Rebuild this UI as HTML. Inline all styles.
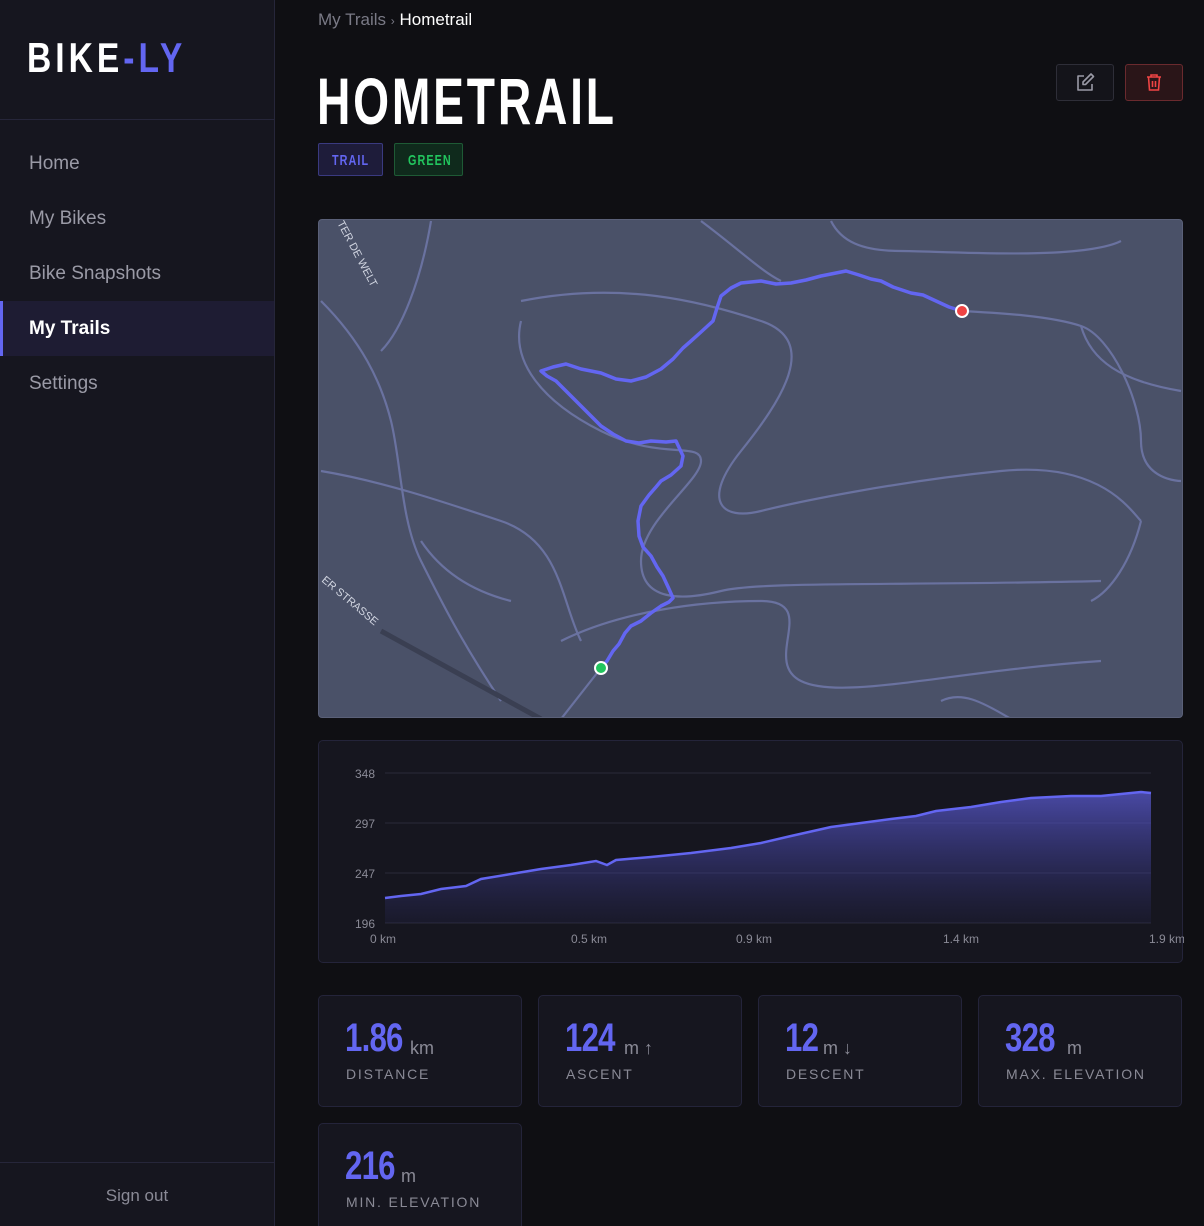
<!DOCTYPE html>
<html><head><meta charset="utf-8"><style>
*{box-sizing:border-box;margin:0;padding:0}
html,body{width:1204px;height:1226px;overflow:hidden}
body{background:#0f0f13;font-family:"Liberation Sans",sans-serif;position:relative;color:#fff}
.side{position:absolute;left:0;top:0;width:275px;height:1226px;background:#16161f;border-right:1px solid #26263a}
.sx{display:inline-block;transform-origin:0 50%;white-space:nowrap;font-weight:bold}
.logo{position:absolute;left:27px;top:34px;font-size:42px;letter-spacing:5px;transform:scaleX(0.8)}
.hr{position:absolute;left:0;width:274px;height:1px;background:#26263a}
.nav{position:absolute;left:0;width:274px;height:55px;line-height:55px;padding-left:29px;font-size:19px;color:#9a9aa6}
.nav.act{background:#1e1c33;color:#fff;border-left:3px solid #6366f1;padding-left:26px;font-weight:bold}
.tag{position:absolute;top:143px;height:33px;line-height:33px;border-radius:2px;overflow:hidden}
.tag .sx{font-size:15px;letter-spacing:1.5px;transform:scaleX(0.72);position:absolute;left:13px}
.btn{position:absolute;top:64px;width:58px;height:37px;border-radius:3px}
.card{position:absolute;width:204px;height:112px;background:#16161f;border:1px solid #24243a;border-radius:5px}
.card .v{position:absolute;left:26px;top:20px;font-size:40px;color:#6366f1;letter-spacing:-1px;transform:scaleX(0.78)}
.card .u{position:absolute;top:42px;font-size:18px;color:#8a8a96}
.card .l{position:absolute;left:27px;top:70px;font-size:14px;letter-spacing:1.8px;color:#8a8a96}
</style></head><body>
<div class="side">
<div class="logo sx"><span>BIKE</span><span style="color:#6366f1">-LY</span></div>
<div class="hr" style="top:119px"></div>
<div class="nav" style="top:136px">Home</div>
<div class="nav" style="top:191px">My Bikes</div>
<div class="nav" style="top:246px">Bike Snapshots</div>
<div class="nav act" style="top:301px">My Trails</div>
<div class="nav" style="top:356px">Settings</div>
<div class="hr" style="top:1162px"></div>
<div style="position:absolute;top:1186px;width:274px;text-align:center;color:#8a8a96;font-size:17px">Sign out</div>
</div>
<div style="position:absolute;left:318px;top:10px;font-size:17px;color:#7a7a86">My Trails <span style="font-size:12px">›</span> <span style="color:#fff">Hometrail</span></div>
<div class="sx" style="position:absolute;left:317px;top:66px;font-size:66px;letter-spacing:4px;transform:scaleX(0.7);line-height:70px">HOMETRAIL</div>
<div class="tag" style="left:318px;width:65px;background:#1e1c3a;border:1px solid #3a3a80;color:#6366f1"><span class="sx">TRAIL</span></div>
<div class="tag" style="left:394px;width:69px;background:#0f2a1c;border:1px solid #1e5a35;color:#22c55e"><span class="sx">GREEN</span></div>
<div class="btn" style="left:1056px;border:1px solid #2e2e38;background:#14141a"><svg width="56" height="35" viewBox="0 0 56 35"><g fill="none" stroke="#9a9aa6" stroke-width="1.6" stroke-linejoin="round"><path d="M27 11h-6v14h14v-6"/><path d="M34 9l2.5 2.5-8 8H26v-2.5z"/></g></svg></div>
<div class="btn" style="left:1125px;border:1px solid #6a2a2e;background:#2a1518"><svg width="56" height="35" viewBox="0 0 56 35"><g fill="none" stroke="#ef4444" stroke-width="1.6"><path d="M21 12h14M25 12v-2h6v2M22.5 12l1 13h9l1-13M26.5 16v6M29.5 16v6"/></g></svg></div>
<div style="position:absolute;left:318px;top:219px;width:865px;height:499px;background:#4a5168;border:1px solid #5a6078;border-radius:4px;overflow:hidden">
<svg width="865" height="499" viewBox="318 219 865 499">
<g fill="none" stroke="#6a72a0" stroke-width="2.2">
<path d="M320 300C360 340 380 380 390 420S400 520 420 560 460 640 500 700"/>
<path d="M430 220C420 280 400 330 380 350"/>
<path d="M520 300C620 280 700 300 760 320S780 400 740 450 720 520 760 510 900 480 1000 470 1130 510 1140 520"/>
<path d="M520 320C510 360 540 400 600 430S700 440 700 460 640 520 640 560 680 600 720 590 900 585 1100 580 1180 460"/>
<path d="M560 640C620 610 700 600 760 600S760 660 800 680 950 670 1100 660 1180 620"/>
<path d="M700 220C740 250 760 270 780 280M960 310C1000 312 1050 315 1080 325S1140 400 1140 440 1180 480 1180 480"/>
<path d="M320 470C380 480 440 500 500 520S560 600 580 640M600 667L560 718M420 540C440 570 470 590 510 600"/>
<path d="M830 220C840 240 860 250 900 250S1080 260 1120 240M1080 325C1090 360 1120 380 1180 390"/>
<path d="M1010 718C980 700 960 690 940 700M1140 520C1130 560 1110 590 1090 600"/>
</g>
<path d="M380 630L540 718" stroke="#3a3f52" stroke-width="5"/>
<text x="336" y="222" fill="#d0d4e0" font-size="11" transform="rotate(62 336 222)" font-family="Liberation Sans">TER DE WELT</text>
<text x="320" y="580" fill="#d0d4e0" font-size="11" transform="rotate(40 320 580)" font-family="Liberation Sans">ER STRASSE</text>
<path d="M600 667L606 660 612 650 618 643 624 632 630 625 640 620 650 612 660 605 668 601 672 597 668 588 662 575 656 566 650 555 642 546 638 535 637 520 640 505 648 494 655 486 660 480 670 474 680 465 682 455 675 440 665 441 650 440 638 442 625 440 612 433 600 425 590 415 575 400 565 390 555 380 546 375 540 370 552 366 565 363 580 368 600 372 615 378 630 380 645 376 660 368 672 358 682 347 690 340 700 331 712 320 716 307 720 295 730 287 740 282 760 280 775 283 790 282 805 279 820 275 845 270 858 274 870 278 880 280 892 286 910 292 922 294 935 300 948 306 961 310" fill="none" stroke="#6366f1" stroke-width="3.5" stroke-linejoin="round"/>
<circle cx="600" cy="667" r="6" fill="#22c55e" stroke="#fff" stroke-width="2"/>
<circle cx="961" cy="310" r="6" fill="#ef4444" stroke="#fff" stroke-width="2"/>
</svg></div>
<div style="position:absolute;left:318px;top:740px;width:865px;height:223px;background:#16161f;border:1px solid #24243a;border-radius:5px">
<svg width="865" height="223" viewBox="318 740 865 223" font-family="Liberation Sans" font-size="12" fill="#8a8a96">
<defs><linearGradient id="g" x1="0" y1="0" x2="0" y2="1"><stop offset="0" stop-color="#5a5ad0" stop-opacity="0.75"/><stop offset="1" stop-color="#3a3a90" stop-opacity="0.1"/></linearGradient></defs>
<g stroke="#2a2a3a"><path d="M384 772H1150M384 822H1150M384 872H1150M384 922H1150"/></g>
<text x="374" y="777" text-anchor="end">348</text><text x="374" y="827" text-anchor="end">297</text><text x="374" y="877" text-anchor="end">247</text><text x="374" y="927" text-anchor="end">196</text>
<text x="369" y="942">0 km</text><text x="570" y="942">0.5 km</text><text x="735" y="942">0.9 km</text><text x="942" y="942">1.4 km</text><text x="1148" y="942">1.9 km</text>
<path d="M384 922L384 897 400 895 420 893 440 888 465 885 480 878 510 873 540 868 570 864 595 860 606 864 615 859 650 856 690 852 730 847 760 842 790 835 830 826 860 822 890 818 915 815 935 810 970 806 1000 801 1030 797 1070 795 1100 795 1120 793 1140 791 1150 792 1150 922Z" fill="url(#g)"/>
<path d="M384 897 400 895 420 893 440 888 465 885 480 878 510 873 540 868 570 864 595 860 606 864 615 859 650 856 690 852 730 847 760 842 790 835 830 826 860 822 890 818 915 815 935 810 970 806 1000 801 1030 797 1070 795 1100 795 1120 793 1140 791 1150 792" fill="none" stroke="#6366f1" stroke-width="2.5"/>
</svg></div>
<div class="card" style="left:318px;top:995px"><div class="v sx">1.86</div><div class="u" style="left:91px">km</div><div class="l">DISTANCE</div></div>
<div class="card" style="left:538px;top:995px"><div class="v sx">124</div><div class="u" style="left:85px">m ↑</div><div class="l">ASCENT</div></div>
<div class="card" style="left:758px;top:995px"><div class="v sx">12</div><div class="u" style="left:64px">m ↓</div><div class="l">DESCENT</div></div>
<div class="card" style="left:978px;top:995px"><div class="v sx">328</div><div class="u" style="left:88px">m</div><div class="l">MAX. ELEVATION</div></div>
<div class="card" style="left:318px;top:1123px;height:120px"><div class="v sx">216</div><div class="u" style="left:82px">m</div><div class="l">MIN. ELEVATION</div></div>
</body></html>
